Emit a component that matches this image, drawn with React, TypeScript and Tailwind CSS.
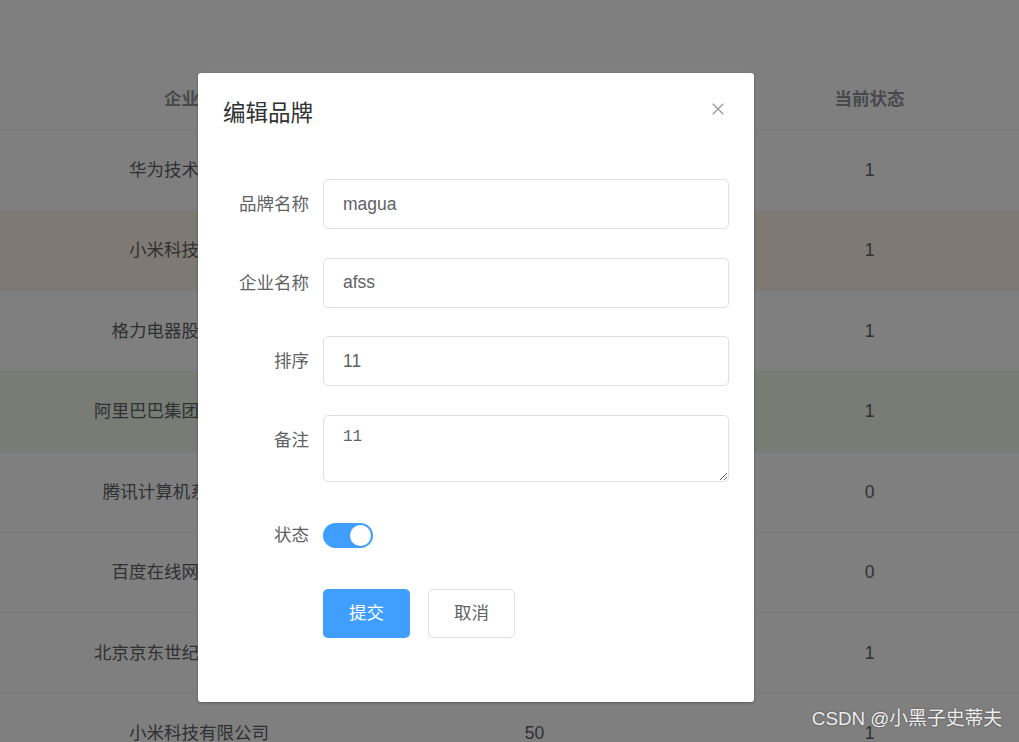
import { X } from "lucide-react";

const rows = [
  { company: "华为技术有限公司", sort: "100", status: "1", tone: "" },
  { company: "小米科技有限公司", sort: "50", status: "1", tone: "bg-[#fdf5e6]" },
  { company: "格力电器股份有限公司", sort: "30", status: "1", tone: "" },
  { company: "阿里巴巴集团控股有限公司", sort: "20", status: "1", tone: "bg-[#f0f9eb]" },
  { company: "腾讯计算机系统有限公司", sort: "10", status: "0", tone: "" },
  { company: "百度在线网络技术公司", sort: "5", status: "0", tone: "" },
  { company: "北京京东世纪贸易有限公司", sort: "40", status: "1", tone: "" },
  { company: "小米科技有限公司", sort: "50", status: "1", tone: "" },
];

const font = "font-['Liberation_Sans','Noto_Sans_CJK_SC',sans-serif]";

function FormRow({ label, children, top }: { label: string; children: React.ReactNode; top?: boolean }) {
  return (
    <div className={`flex ${top ? "items-start" : "items-center"}`}>
      <label className="w-[100px] shrink-0 pr-[14px] text-right text-[17.5px] leading-[50px] text-[#606266]">
        {label}
      </label>
      <div className="flex-1">{children}</div>
    </div>
  );
}

function TextInput({ value }: { value: string }) {
  return (
    <input
      readOnly
      value={value}
      className={`h-[50px] w-full rounded-[5px] border border-[#dcdfe6] bg-white px-[19px] text-[17.5px] text-[#606266] outline-none ${font}`}
    />
  );
}

export default function App() {
  return (
    <div className={`relative h-[742px] w-full overflow-hidden bg-white ${font}`}>
      {/* table behind the mask */}
      <div className="pt-[70px]">
        <div className="grid h-[60px] grid-cols-[31px_336px_335px_335px_1fr] items-center border-b border-[#ebeef5] text-[17.5px] font-bold text-[#909399]">
          <div />
          <div className="text-center">企业名称</div>
          <div className="text-center">排序</div>
          <div className="text-center">当前状态</div>
          <div />
        </div>
        {rows.map((r, i) => (
          <div
            key={i}
            className={`grid h-[80.5px] grid-cols-[31px_336px_335px_335px_1fr] items-center border-b border-[#ebeef5] text-[17.5px] text-[#606266] ${r.tone}`}
          >
            <div />
            <div className="text-center">{r.company}</div>
            <div className="text-center">{r.sort}</div>
            <div className="text-center">{r.status}</div>
            <div />
          </div>
        ))}
      </div>

      {/* mask */}
      <div className="absolute inset-0 bg-black/50" />

      {/* dialog */}
      <div className="absolute left-[198px] top-[73px] w-[556px] rounded-[3px] bg-white shadow-[0_1px_3px_rgba(0,0,0,0.3)]">
        <div className="flex items-center justify-between px-[25px] pt-[26px]">
          <span className="text-[22.5px] leading-[30px] text-[#303133]">编辑品牌</span>
          <X className="mr-[1px] mt-[-10px] h-[20px] w-[20px] text-[#909399]" strokeWidth={1.3} />
        </div>
        <div className="flex flex-col gap-[28.5px] px-[25px] pb-[64px] pt-[50px]">
          <FormRow label="品牌名称">
            <TextInput value="magua" />
          </FormRow>
          <FormRow label="企业名称">
            <TextInput value="afss" />
          </FormRow>
          <FormRow label="排序">
            <TextInput value="11" />
          </FormRow>
          <FormRow label="备注" top>
            <textarea
              readOnly
              value="11"
              className="block h-[67px] w-full resize-y rounded-[5px] border border-[#dcdfe6] bg-white px-[19px] pb-[6px] pt-[9px] font-['Liberation_Mono',monospace] text-[16px] leading-[1.5] text-[#606266] outline-none"
            />
          </FormRow>
          <FormRow label="状态">
            <div className="flex h-[50px] items-center">
              <div className="flex h-[25px] w-[50px] items-center justify-end rounded-full bg-[#409eff] px-[2px]">
                <div className="h-[21px] w-[21px] rounded-full bg-white" />
              </div>
            </div>
          </FormRow>
          <div className="flex gap-[18px] pl-[100px]">
            <button className="h-[49px] w-[87px] rounded-[5px] bg-[#409eff] text-[17.5px] text-white">提交</button>
            <button className="h-[49px] w-[87px] rounded-[5px] border border-[#dcdfe6] bg-white text-[17.5px] text-[#606266]">
              取消
            </button>
          </div>
        </div>
      </div>

      {/* watermark */}
      <div className="absolute bottom-[9px] right-[17px] text-[18.8px] text-white/90 [text-shadow:0_0_2px_rgba(0,0,0,0.5)]">
        CSDN @小黑子史蒂夫
      </div>
    </div>
  );
}
